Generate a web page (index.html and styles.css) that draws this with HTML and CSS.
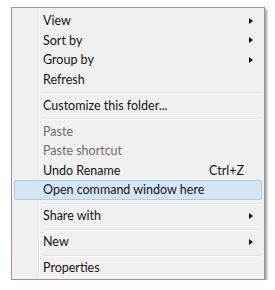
FILE: index.html
```html
<!DOCTYPE html>
<html lang="en">
<head>
  <meta charset="UTF-8" />
  <title>Context menu</title>
  <link rel="stylesheet" href="styles.css">
</head>
<body>
  <div class="menu">
    <div class="item">View<span class="arrow"></span></div>
    <div class="item">Sort by<span class="arrow"></span></div>
    <div class="item">Group by<span class="arrow"></span></div>
    <div class="item">Refresh</div>
    <div class="sep"></div>
    <div class="item">Customize this folder...</div>
    <div class="sep"></div>
    <div class="item disabled">Paste</div>
    <div class="item disabled">Paste shortcut</div>
    <div class="item">Undo Rename<span class="shortcut">Ctrl+Z</span></div>
    <div class="item active">Open command window here</div>
    <div class="sep"></div>
    <div class="item">Share with<span class="arrow"></span></div>
    <div class="sep"></div>
    <div class="item">New<span class="arrow"></span></div>
    <div class="sep"></div>
    <div class="item">Properties</div>
  </div>
</body>
</html>
```

FILE: styles.css
```css
body {
  margin: 0;
  padding: 7px 0 0 11px;
  background: #fff;
  font-family: Lato, 'Liberation Sans', sans-serif;
  font-size: 12.5px;
  color: #151515;
}

.menu {
  width: 248px;
  padding: 3px 2px 1px;
  border: 1px solid #979797;
  box-shadow: 2px 2px 2px rgba(0, 0, 0, 0.35);
  background:
    linear-gradient(to right, transparent 26px, #e2e2e2 26px, #e2e2e2 27px, #fff 27px, #fff 28px, transparent 28px),
    linear-gradient(to bottom, #f0f0f0 70%, #f4eef0);
}

.item {
  display: flex;
  align-items: center;
  box-sizing: border-box;
  height: 19.5px;
  padding: 0 8px 0 28px;
  border: 1px solid transparent;
}

.item.disabled {
  color: #6d6d6d;
}

.item.active {
  background: #d5e5f4;
  border-color: #a9cbec;
  border-radius: 2px;
}

.shortcut {
  margin-left: auto;
  margin-right: 9px;
}

.arrow {
  margin-left: auto;
  width: 0;
  height: 0;
  border-left: 4px solid #111;
  border-top: 3.5px solid transparent;
  border-bottom: 3.5px solid transparent;
}

.sep {
  height: 1px;
  margin: 3px 0 1.5px 28px;
  background: #e0e0e0;
  border-bottom: 1px solid #fff;
}
```
